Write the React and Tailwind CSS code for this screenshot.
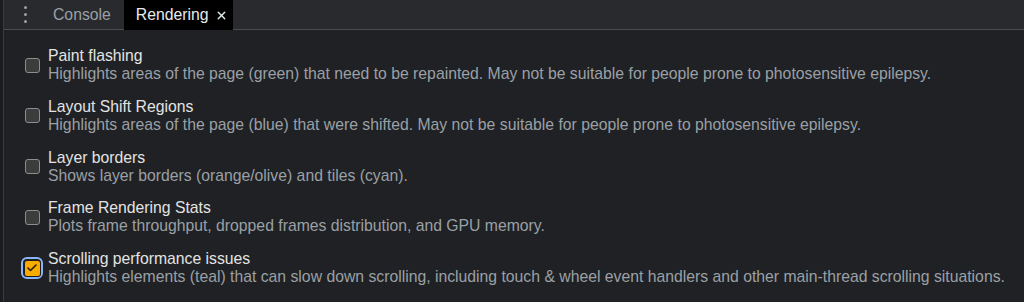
import { Check, X } from 'lucide-react'

const OPTIONS = [
  {
    title: 'Paint flashing',
    desc: 'Highlights areas of the page (green) that need to be repainted. May not be suitable for people prone to photosensitive epilepsy.',
  },
  {
    title: 'Layout Shift Regions',
    desc: 'Highlights areas of the page (blue) that were shifted. May not be suitable for people prone to photosensitive epilepsy.',
  },
  {
    title: 'Layer borders',
    desc: 'Shows layer borders (orange/olive) and tiles (cyan).',
  },
  {
    title: 'Frame Rendering Stats',
    desc: 'Plots frame throughput, dropped frames distribution, and GPU memory.',
  },
  {
    title: 'Scrolling performance issues',
    desc: 'Highlights elements (teal) that can slow down scrolling, including touch & wheel event handlers and other main-thread scrolling situations.',
    checked: true,
  },
]

function Box({ checked }) {
  if (checked) {
    return (
      <div className="w-[22px] h-[22px] rounded-[6px] border-2 border-[#8ab4f8] flex items-center justify-center">
        <div className="w-[17px] h-[17px] rounded-[3px] bg-[#f9ab00] border border-[#1c1c1c] flex items-center justify-center">
          <Check size={12} strokeWidth={3.2} className="text-[#262000]" />
        </div>
      </div>
    )
  }
  return (
    <div className="w-[22px] h-[22px] flex items-center justify-center">
      <div className="w-[15px] h-[15px] rounded-[3px] bg-[#3c3c3c] border-[1.5px] border-[#8d8d8d]" />
    </div>
  )
}

export default function App() {
  return (
    <div className="w-[1024px] h-[302px] bg-[#202124] flex overflow-hidden font-['Liberation_Sans',Arial,sans-serif]">
      <div className="w-[4px] shrink-0 bg-[#1b1c1f] border-r border-[#3a3b3e]" />
      <div className="flex-1 flex flex-col">
        <div className="h-[30px] shrink-0 bg-[#292a2d] border-b border-[#4a4c50] flex items-stretch">
          <div className="w-[42px] flex flex-col items-center justify-center gap-[4px] pl-[1px]">
            <span className="w-[3px] h-[3px] rounded-full bg-[#9aa0a6]" />
            <span className="w-[3px] h-[3px] rounded-full bg-[#9aa0a6]" />
            <span className="w-[3px] h-[3px] rounded-full bg-[#9aa0a6]" />
          </div>
          <div className="flex items-center px-[7px] text-[15.75px] text-[#9aa0a6]">Console</div>
          <div className="flex items-center gap-[7px] ml-[6px] pl-[12px] pr-[5px] bg-black text-[15.75px] text-[#e8eaed] mb-[-1px]">
            Rendering
            <X size={13} strokeWidth={2.5} className="text-[#e8eaed]" />
          </div>
        </div>
        <div className="flex flex-col gap-[14.75px] pt-[17px]">
          {OPTIONS.map(({ title, desc, checked }) => (
            <div key={title} className="flex items-center gap-[5px] pl-[17px]">
              <Box checked={checked} />
              <div className="flex flex-col text-[15.75px] leading-[18px]">
                <span className="text-[#e3e3e3]">{title}</span>
                <span className="text-[#9aa0a6]">{desc}</span>
              </div>
            </div>
          ))}
        </div>
      </div>
    </div>
  )
}
